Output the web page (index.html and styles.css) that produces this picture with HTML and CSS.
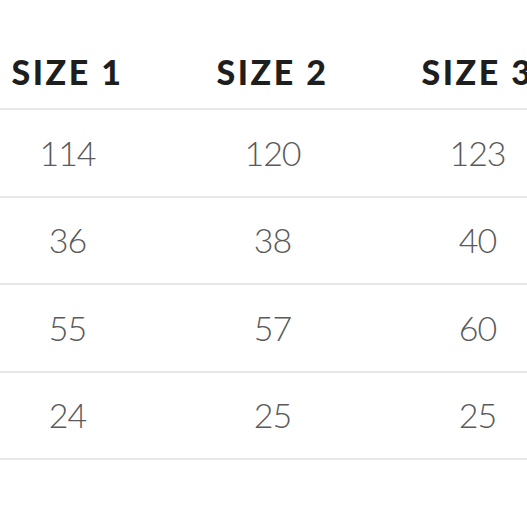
FILE: index.html
```html
<!DOCTYPE html>
<html>
<head>
<meta charset="utf-8">
<link rel="stylesheet" href="styles.css">
</head>
<body>
<div class="table">
  <div class="row head">
    <div class="cell">SIZE 1</div>
    <div class="cell">SIZE 2</div>
    <div class="cell">SIZE 3</div>
  </div>
  <div class="row">
    <div class="cell">114</div>
    <div class="cell">120</div>
    <div class="cell">123</div>
  </div>
  <div class="row">
    <div class="cell">36</div>
    <div class="cell">38</div>
    <div class="cell">40</div>
  </div>
  <div class="row">
    <div class="cell">55</div>
    <div class="cell">57</div>
    <div class="cell">60</div>
  </div>
  <div class="row">
    <div class="cell">24</div>
    <div class="cell">25</div>
    <div class="cell">25</div>
  </div>
</div>
</body>
</html>
```
FILE: styles.css
```css
html, body {
  margin: 0;
  padding: 0;
  background: #fff;
  overflow: hidden;
}
.table {
  width: 615px;
  margin-left: -35px;
  font-family: Lato, "Liberation Sans", sans-serif;
}
.row {
  display: grid;
  grid-template-columns: 205px 205px 205px;
  height: 85.5px;
  align-items: center;
  border-bottom: 2px solid #e8e8e8;
  color: #5a5a5a;
  font-weight: 300;
  font-size: 34px;
  letter-spacing: -1px;
}
.row.head {
  height: 108px;
  align-items: start;
  color: #1e1e1e;
  font-weight: 900;
  font-size: 34px;
  letter-spacing: 2.5px;
}
.row.head .cell {
  padding-top: 52px;
}
.cell {
  text-align: center;
  line-height: 40px;
}
```
